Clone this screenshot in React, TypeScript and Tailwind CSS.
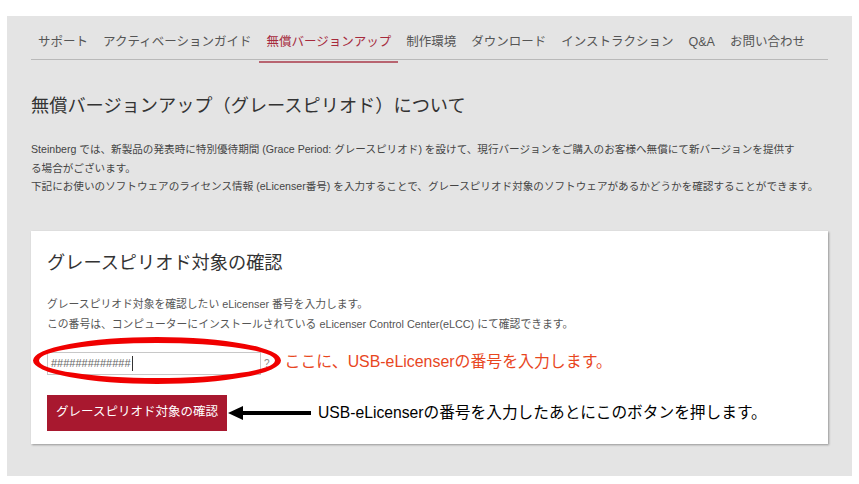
import React from "react";

const navItems = [
  { label: "サポート" },
  { label: "アクティベーションガイド" },
  { label: "無償バージョンアップ", active: true },
  { label: "制作環境" },
  { label: "ダウンロード" },
  { label: "インストラクション" },
  { label: "Q&A" },
  { label: "お問い合わせ" },
];

const font = {
  fontFamily: '"Liberation Sans", "Noto Sans CJK JP", sans-serif',
};

const App = () => {
  return (
    <div className="min-h-[484px] w-[859px] bg-white pt-[16px] pl-[7px]" style={font}>
      <div className="w-[845px] h-[460px] bg-[#e4e4e4] px-[24px] pb-[32px]">
        {/* Nav */}
        <ul className="flex border-b border-[#b9b9b9] gap-[1px]">
          {navItems.map((item) => (
            <li
              key={item.label}
              className={`relative px-[7px] pt-[17px] pb-[8px] text-[12.5px] leading-[18px] whitespace-nowrap ${
                item.active ? "text-[#a62a3c]" : "text-[#555]"
              }`}
            >
              {item.label}
              {item.active && (
                <span className="absolute left-0 right-0 -bottom-[4px] h-[2px] bg-[#b86470]" />
              )}
            </li>
          ))}
        </ul>

        <h1 className="mt-[33px] text-[18.2px] leading-[26px] text-[#333] whitespace-nowrap">
          無償バージョンアップ（グレースピリオド）について
        </h1>

        <p className="mt-[21px] text-[10.6px] leading-[18.5px] text-[#444] whitespace-nowrap">
          Steinberg では、新製品の発表時に特別優待期間 (Grace Period: グレースピリオド) を設けて、現行バージョンをご購入のお客様へ無償にて新バージョンを提供す
          <br />
          る場合がございます。
          <br />
          下記にお使いのソフトウェアのライセンス情報 (eLicenser番号) を入力することで、グレースピリオド対象のソフトウェアがあるかどうかを確認することができます。
        </p>

        {/* Card */}
        <div className="mt-[35px] w-[797px] bg-white px-[16px] pt-[19px] pb-[13px] shadow-[1px_1px_2px_rgba(0,0,0,0.35)]">
          <h2 className="text-[18.2px] leading-[26px] text-[#333]">グレースピリオド対象の確認</h2>
          <div className="mt-[18px] text-[10.8px] leading-[20px] text-[#555]">
            <p>グレースピリオド対象を確認したい eLicenser 番号を入力します。</p>
            <p>この番号は、コンピューターにインストールされている eLicenser Control Center(eLCC) にて確認できます。</p>
          </div>

          <div className="mt-[18px] flex items-center">
            <div className="relative flex items-center">
              <div className="w-[214px] h-[23px] border border-[#c8c8c8] bg-white flex items-center pl-[3px] text-[11px] text-[#666]">
                <span>#############</span>
                <span className="ml-[1px] w-px h-[15px] bg-[#333]" />
              </div>
              <span className="ml-[3px] text-[10px] text-[#888]">?</span>
              {/* annotation ellipse */}
              <span className="absolute left-[-14px] top-[-15px] w-[248px] h-[47px] rounded-[50%] border-[6px] border-[#f00000]" />
            </div>
            <span className="ml-[15px] -mt-[3px] text-[15.9px] text-[#e8461e] whitespace-nowrap">
              ここに、USB-eLicenserの番号を入力します。
            </span>
          </div>

          <div className="mt-[20px] flex items-center">
            <button className="w-[180px] h-[36px] bg-[#a8182f] text-white text-[12.5px]">
              グレースピリオド対象の確認
            </button>
            <svg width="84" height="16" viewBox="0 0 84 16" className="ml-[1px]">
              <polygon points="0,8 15,1 15,15" fill="#000" />
              <rect x="14" y="6" width="69" height="4" fill="#000" />
            </svg>
            <span className="ml-[6px] text-[15.7px] text-black whitespace-nowrap">
              USB-eLicenserの番号を入力したあとにこのボタンを押します。
            </span>
          </div>
        </div>
      </div>
    </div>
  );
};

export default App;
